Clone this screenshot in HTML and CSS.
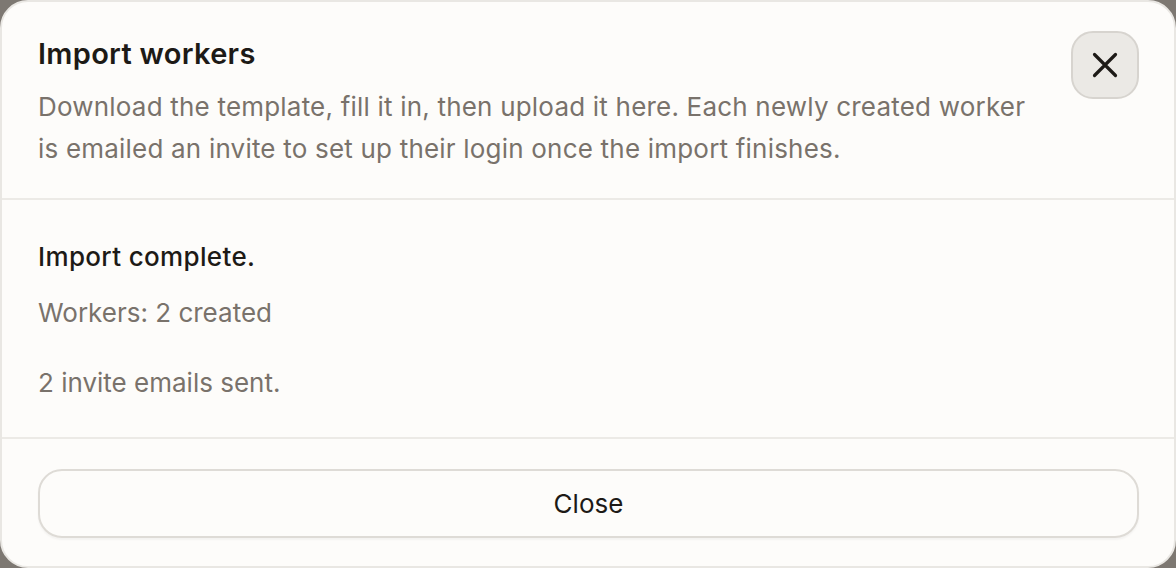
FILE: index.html
```html
<!DOCTYPE html>
<html lang="en">
<head>
<meta charset="utf-8">
<title>Import workers</title>
<link rel="stylesheet" href="styles.css">
</head>
<body>
<div class="dialog">
  <header class="dialog-header">
    <div class="header-text">
      <h1 class="title">Import workers</h1>
      <p class="subtitle">Download the template, fill it in, then upload it here. Each newly created worker<br>is emailed an invite to set up their login once the import finishes.</p>
    </div>
    <button class="close-x" aria-label="Close">
      <svg width="28" height="28" viewBox="0 0 28 28" fill="none" stroke="currentColor" stroke-width="3.2" stroke-linecap="round"><path d="M3.5 3.5L24.5 24.5M24.5 3.5L3.5 24.5"/></svg>
    </button>
  </header>
  <section class="dialog-body">
    <p class="result-title">Import complete.</p>
    <p class="result-line">Workers: 2 created</p>
    <p class="result-line invites">2 invite emails sent.</p>
  </section>
  <footer class="dialog-footer">
    <button class="close-btn">Close</button>
  </footer>
</div>
</body>
</html>
```
FILE: styles.css
```css
* { box-sizing: border-box; }
html, body { margin: 0; padding: 0; }
body {
  width: 1176px;
  height: 568px;
  background: #7d7872;
  font-family: Inter, "Open Sans", sans-serif;
  overflow: hidden;
}
.dialog {
  width: 1176px;
  height: 568px;
  background: #fdfcfa;
  border: 2px solid #e9e7e3;
  border-radius: 28px;
  display: flex;
  flex-direction: column;
}
.dialog-header {
  display: flex;
  justify-content: space-between;
  align-items: flex-start;
  padding: 29px 35px 28px 36px;
  border-bottom: 2px solid #eceae6;
}
.title {
  margin: 5px 0 0;
  font-size: 29px;
  line-height: 36px;
  font-weight: 600;
  letter-spacing: 0.3px;
  color: #1d1a16;
}
.subtitle {
  margin: 14px 0 0;
  font-size: 26px;
  line-height: 42px;
  letter-spacing: 0.2px;
  color: #79726b;
}
.close-x {
  width: 68px;
  height: 68px;
  flex: none;
  border: 2px solid #d7d4cf;
  border-radius: 22px;
  background: #ebe9e5;
  color: #1d1a16;
  display: flex;
  align-items: center;
  justify-content: center;
  padding: 0;
}
.dialog-body {
  padding: 39px 36px 36px;
  border-bottom: 2px solid #eceae6;
}
.result-title {
  margin: 0;
  font-size: 26px;
  line-height: 36px;
  font-weight: 500;
  letter-spacing: 0.35px;
  color: #1d1a16;
}
.result-line {
  margin: 20px 0 0;
  font-size: 26px;
  line-height: 36px;
  color: #79726b;
}
.result-line.invites { margin-top: 34px; }
.dialog-footer {
  flex: 1;
  padding: 30px 35px 0 36px;
}
.close-btn {
  width: 100%;
  height: 69px;
  border: 2px solid #dedbd6;
  border-radius: 24px;
  background: #fdfcfa;
  font-family: inherit;
  font-size: 26px;
  color: #1d1a16;
  box-shadow: 0 2px 2px rgba(0,0,0,0.04);
}
```
